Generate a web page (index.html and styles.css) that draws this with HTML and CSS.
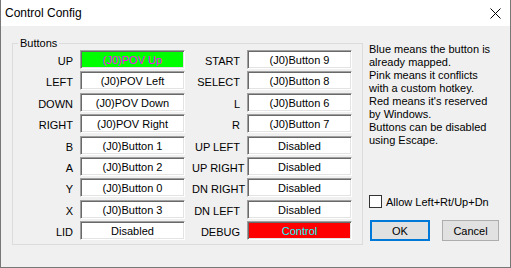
FILE: index.html
```html
<!DOCTYPE html>
<html lang="en">
<head>
    <meta charset="UTF-8">
    <title>Control Config</title>
    <link rel="stylesheet" href="styles.css">
</head>
<body>
    <div class="window">
        <div class="titlebar">
            <span class="title">Control Config</span>
            <svg class="close" width="11" height="11" viewBox="0 0 11 11">
                <path d="M0.5 0.5 L10.5 10.5 M10.5 0.5 L0.5 10.5" stroke="#000" stroke-width="1" fill="none"/>
            </svg>
        </div>
        <div class="content">
            <div class="group">
                <span class="group-title">Buttons</span>
                <div class="mapping">
                    <span class="lbl">UP</span><span class="key key-mapped">(J0)POV Up</span>
                    <span class="lbl">START</span><span class="key">(J0)Button 9</span>

                    <span class="lbl">LEFT</span><span class="key">(J0)POV Left</span>
                    <span class="lbl">SELECT</span><span class="key">(J0)Button 8</span>

                    <span class="lbl">DOWN</span><span class="key">(J0)POV Down</span>
                    <span class="lbl">L</span><span class="key">(J0)Button 6</span>

                    <span class="lbl">RIGHT</span><span class="key">(J0)POV Right</span>
                    <span class="lbl">R</span><span class="key">(J0)Button 7</span>

                    <span class="lbl">B</span><span class="key">(J0)Button 1</span>
                    <span class="lbl">UP LEFT</span><span class="key">Disabled</span>

                    <span class="lbl">A</span><span class="key">(J0)Button 2</span>
                    <span class="lbl">UP RIGHT</span><span class="key">Disabled</span>

                    <span class="lbl">Y</span><span class="key">(J0)Button 0</span>
                    <span class="lbl">DN RIGHT</span><span class="key">Disabled</span>

                    <span class="lbl">X</span><span class="key">(J0)Button 3</span>
                    <span class="lbl">DN LEFT</span><span class="key">Disabled</span>

                    <span class="lbl">LID</span><span class="key">Disabled</span>
                    <span class="lbl">DEBUG</span><span class="key key-reserved">Control</span>
                </div>
            </div>
            <div class="side">
                <p class="help">Blue means the button is<br>already mapped.<br>Pink means it conflicts<br>with a custom hotkey.<br>Red means it's reserved<br>by Windows.<br>Buttons can be disabled<br>using Escape.</p>
                <label class="check">
                    <span class="box"></span>
                    <span>Allow Left+Rt/Up+Dn</span>
                </label>
                <div class="buttons">
                    <button class="btn btn-default">OK</button>
                    <button class="btn btn-cancel">Cancel</button>
                </div>
            </div>
        </div>
    </div>
</body>
</html>
```

FILE: styles.css
```css
body {
    margin: 0;
    font-family: "Liberation Sans", Arial, sans-serif;
    font-size: 11px;
    color: #000;
}
.window {
    width: 511px;
    height: 268px;
    box-sizing: border-box;
    background: #f0f0f0;
    border: 1px solid #777;
    border-top: none;
}
.titlebar {
    height: 26px;
    background: #fff;
    display: flex;
    justify-content: space-between;
    padding-left: 4px;
}
.title {
    font-size: 12px;
    line-height: 26px;
}
.close {
    margin: 8px 9px 0 0;
}
.content {
    display: flex;
    padding: 17px 0 0 11px;
}
.group {
    width: 351px;
    box-sizing: border-box;
    border: 1px solid #dcdcdc;
    padding: 0 10px 4px 0;
}
.group-title {
    display: table;
    margin: -7px 0 0 5px;
    padding: 0 2px;
    line-height: 13px;
    background: #f0f0f0;
}
.mapping {
    display: grid;
    grid-template-columns: 60px 105px 48px 105px;
    grid-auto-rows: 19px;
    column-gap: 7px;
    row-gap: 2.4px;
}
.lbl {
    text-align: right;
    white-space: nowrap;
    line-height: 19px;
    padding-top: 2px;
}
.key {
    box-sizing: border-box;
    background: #fff;
    border: 1px solid;
    border-color: #a0a0a0 #fff #fff #a0a0a0;
    box-shadow: inset 1px 1px 0 #696969, inset -1px -1px 0 #e3e3e3;
    text-align: center;
    line-height: 18px;
    white-space: nowrap;
}
.key-mapped {
    background: #00ff00;
    color: #ff00ff;
}
.key-reserved {
    background: #ff0000;
    color: #00ffff;
}
.side {
    margin-left: 6px;
    display: flex;
    flex-direction: column;
}
.help {
    margin: 0;
    line-height: 13px;
}
.check {
    display: flex;
    align-items: center;
    gap: 4px;
    margin-top: 48px;
    height: 13px;
}
.box {
    width: 13px;
    height: 13px;
    box-sizing: border-box;
    border: 1px solid #333;
    background: #fff;
}
.buttons {
    display: flex;
    gap: 12px;
    margin: 12px 0 0 1px;
}
.btn {
    height: 21px;
    box-sizing: border-box;
    background: #e1e1e1;
    font-family: "Liberation Sans", Arial, sans-serif;
    font-size: 11px;
    color: #000;
    padding: 0;
}
.btn-default {
    width: 60px;
    border: 2px solid #0078d7;
}
.btn-cancel {
    width: 57px;
    border: 1px solid #adadad;
}
```
